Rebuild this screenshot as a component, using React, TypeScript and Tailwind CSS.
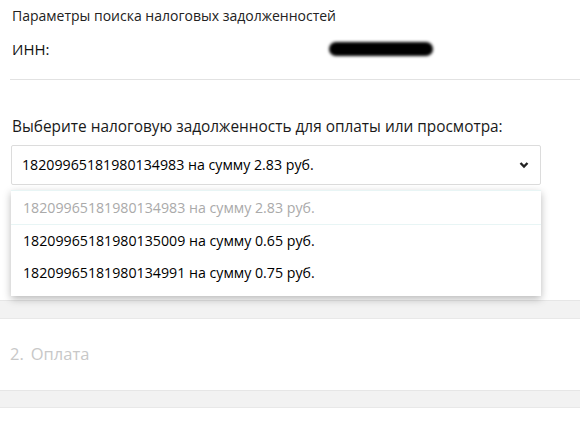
import React from "react";

export default function App() {
  const font = { fontFamily: '"Open Sans", "Noto Sans", sans-serif' };
  return (
    <div className="relative w-[580px] h-[435px] overflow-hidden bg-white" style={font}>
      <div className="h-[300px] bg-white pt-[5px]">
        <div className="pl-[12px] text-[14px] leading-[22px] text-[#222]">Параметры поиска налоговых задолженностей</div>
        <div className="flex items-center h-[22px] mt-[11px] pl-[12px] text-[15px] text-[#111]">
          <span>ИНН:</span>
          <div className="ml-[280px] w-[104px] h-[14px] rounded-full bg-black blur-[1.5px]" />
        </div>
        <div className="ml-[10px] mt-[19px] h-px bg-[#e2e2e2]" />
        <div className="pl-[12px] mt-[36px] text-[15.4px] leading-[22px] text-[#1a1a1a]">
          Выберите налоговую задолженность для оплаты или просмотра:
        </div>
        <div className="ml-[11px] mt-[7px] w-[530px] h-[40px] border border-[#dcdcdc] rounded-[2px] flex items-center justify-between pl-[10px] pr-[11px]">
          <span className="text-[14.2px] text-[#000]">18209965181980134983 на сумму 2.83 руб.</span>
          <svg width="10" height="8" viewBox="0 0 10 8">
            <polyline points="1.5,2 5,5.5 8.5,2" fill="none" stroke="#222" strokeWidth="2.4" />
          </svg>
        </div>
      </div>
      <div className="h-[19px] bg-[#f2f2f2] border-t border-[#e6e6e6] border-b border-b-[#e8e8e8]" />
      <div className="h-[71px] bg-white flex items-center pl-[10px] text-[16.5px] text-[#c8c8c8]">
        <span>2.</span>
        <span className="ml-[7px]">Оплата</span>
      </div>
      <div className="h-[18px] bg-[#f2f2f2] border-t border-[#e6e6e6] border-b border-b-[#e8e8e8]" />
      <div className="bg-white h-[30px]" />

      <div className="absolute left-[11px] top-[190px] w-[530px] bg-white shadow-[0_3px_8px_rgba(0,0,0,0.28)] text-[14.2px]">
        <div className="h-[35px] flex items-center pl-[12px] text-[#aaa] border-t border-b border-[#e8f5f5]">
          <span>18209965181980134983 на сумму 2.83 руб.</span>
        </div>
        <div className="h-[32px] flex items-center pl-[12px] text-[#000]">
          <span>18209965181980135009 на сумму 0.65 руб.</span>
        </div>
        <div className="h-[32px] flex items-center pl-[12px] text-[#000]">
          <span>18209965181980134991 на сумму 0.75 руб.</span>
        </div>
        <div className="h-[7px]" />
      </div>
    </div>
  );
}
